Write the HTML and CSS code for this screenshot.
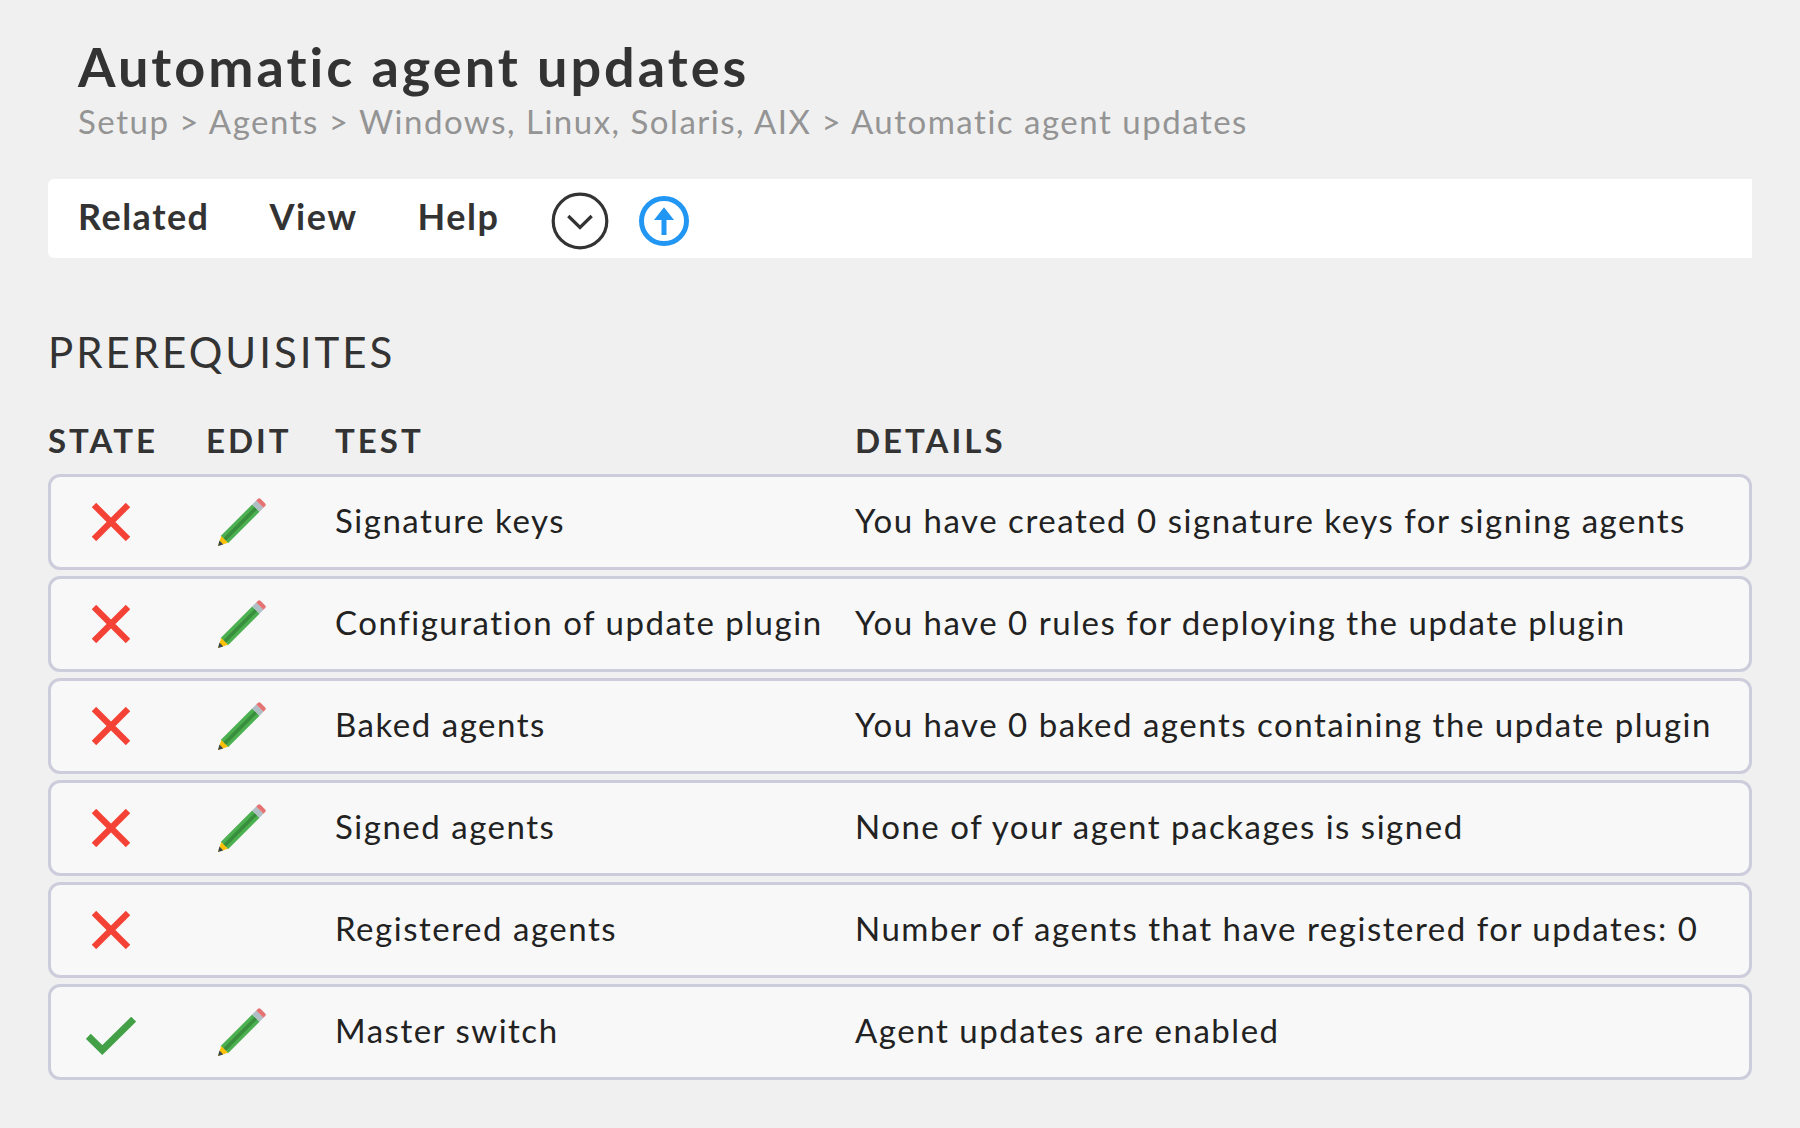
FILE: index.html
```html
<!DOCTYPE html>
<html lang="en">
<head>
<meta charset="utf-8">
<title>Automatic agent updates</title>
<link rel="stylesheet" href="styles.css">
</head>
<body>
<svg class="sprite" aria-hidden="true">
  <symbol id="cross" viewBox="0 0 38 38"><path d="M2 2 36 36M36 2 2 36" fill="none" stroke="#f44336" stroke-width="6.2"/></symbol>
  <symbol id="check" viewBox="0 0 50 38"><path d="M2.3 19.3 16.3 33.1 47.7 2.2" fill="none" stroke="#43a047" stroke-width="7"/></symbol>
  <symbol id="pencil" viewBox="0 0 48 48">
    <path d="M34.2 6.5 41.5 13.8 10 45.2 2.7 38z" fill="#4caf50"/>
    <path d="M36.7 8.9 39.2 11.4 7.7 42.9 5.1 40.4z" fill="#388e3c"/>
    <path d="M34.2 6.5 38.2 2.6 45.4 9.8 41.5 13.8z" fill="#b0bec5"/>
    <path d="M38.2 2.6 40 .8Q41.2 -.4 42.5 .8L47.2 5.5Q48.4 6.8 47.2 8L45.4 9.8z" fill="#e57373"/>
    <path d="M3.2 38 10 44.8 0 48z" fill="#ffc107"/>
    <path d="M1.5 42.6 5.2 46.4 0 48z" fill="#37474f"/>
  </symbol>
</svg>
<header class="page-header">
  <h1 class="title">Automatic agent updates</h1>
  <p class="breadcrumb">Setup &gt; Agents &gt; Windows, Linux, Solaris, AIX &gt; Automatic agent updates</p>
</header>
<nav class="menu">
  <span>Related</span><span>View</span><span>Help</span>
  <svg class="icon-more" viewBox="0 0 56 56"><circle cx="28" cy="28" r="26.8" fill="none" stroke="#333" stroke-width="3.2"/><path d="M16.3 23 28 34.4 39.7 23" fill="none" stroke="#333" stroke-width="3.2"/></svg>
  <svg class="icon-up" viewBox="0 0 50 50"><circle cx="25" cy="25" r="22.5" fill="none" stroke="#2196f3" stroke-width="5"/><path d="M25 11.3 35 24H27.5V39H22.5V24H15z" fill="#2196f3"/></svg>
</nav>
<main>
  <h2 class="section">PREREQUISITES</h2>
  <div class="table">
    <div class="head"><span>STATE</span><span>EDIT</span><span>TEST</span><span>DETAILS</span></div>
    <div class="row"><svg class="cross"><use href="#cross"/></svg><svg class="pencil"><use href="#pencil"/></svg><span class="test">Signature keys</span><span class="details">You have created 0 signature keys for signing agents</span></div>
    <div class="row"><svg class="cross"><use href="#cross"/></svg><svg class="pencil"><use href="#pencil"/></svg><span class="test">Configuration of update plugin</span><span class="details">You have 0 rules for deploying the update plugin</span></div>
    <div class="row"><svg class="cross"><use href="#cross"/></svg><svg class="pencil"><use href="#pencil"/></svg><span class="test">Baked agents</span><span class="details">You have 0 baked agents containing the update plugin</span></div>
    <div class="row"><svg class="cross"><use href="#cross"/></svg><svg class="pencil"><use href="#pencil"/></svg><span class="test">Signed agents</span><span class="details">None of your agent packages is signed</span></div>
    <div class="row"><svg class="cross"><use href="#cross"/></svg><span class="test">Registered agents</span><span class="details">Number of agents that have registered for updates: 0</span></div>
    <div class="row"><svg class="check"><use href="#check"/></svg><svg class="pencil"><use href="#pencil"/></svg><span class="test">Master switch</span><span class="details">Agent updates are enabled</span></div>
  </div>
</main>
</body>
</html>
```
FILE: styles.css
```css
body {
  box-sizing: border-box;
  min-height: 1128px;
  margin: 0;
  padding: 37px 48px 0;
  background: #f0f0f0;
  color: #333;
  font-family: Lato, sans-serif;
  letter-spacing: 1.5px;
}

h1, h2, p { margin: 0; }

svg { display: block; overflow: visible; }

.sprite { display: none; }

.page-header { padding-left: 30px; }

.title {
  font-size: 54px;
  line-height: 60px;
  font-weight: 700;
  letter-spacing: 3px;
}

.breadcrumb {
  margin-top: 3px;
  color: #949494;
  font-size: 33px;
  line-height: 42px;
  letter-spacing: 1.51px;
}

.menu {
  display: flex;
  gap: 60px;
  height: 79px;
  margin-top: 37px;
  padding-left: 30px;
  border-radius: 6px 0 0 6px;
  background: #fff;
  font-size: 36px;
  line-height: 74px;
  font-weight: 700;
}

.icon-more { width: 56px; height: 56px; margin: 13.5px 0 0 -7px; }
.icon-up { width: 50px; height: 50px; margin: 17px 0 0 -29px; }

.section {
  margin-top: 69px;
  font-size: 42px;
  line-height: 50px;
  font-weight: 400;
  letter-spacing: 3px;
}

.table {
  display: flex;
  flex-direction: column;
  gap: 6px;
  margin-top: 43px;
  font-size: 33px;
}

.head, .row {
  display: grid;
  grid-template-columns: 158px 129px 520px 1fr;
}

.head {
  margin-bottom: 8px;
  line-height: 40px;
  font-weight: 700;
  letter-spacing: 3px;
}

.row {
  box-sizing: border-box;
  height: 96px;
  border: 3px solid #ccccdc;
  border-radius: 12px;
  background: #f8f8f8;
  color: #222;
  align-items: center;
  grid-template-columns: 155px 129px 520px 1fr;
  letter-spacing: 1.52px;
}

.test, .details { white-space: nowrap; line-height: 40px; margin-bottom: 4px; }
.test { grid-column: 3; }
.details { grid-column: 4; }

.cross { width: 38px; height: 38px; margin-left: 41px; }
.pencil { width: 48px; height: 48px; margin-left: 12px; }
.check { width: 50px; height: 38px; margin: 7px 0 0 35px; }
```
